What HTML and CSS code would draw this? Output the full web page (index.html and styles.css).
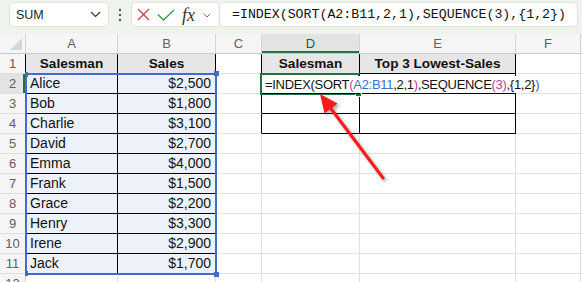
FILE: index.html
```html
<!DOCTYPE html>
<html>
<head>
<meta charset="utf-8">
<link rel="stylesheet" href="styles.css">
</head>
<body>
<div class="app">
  <div class="topbar">
    <div class="namebox">
      <span>SUM</span>
      <svg width="11" height="7" viewBox="0 0 11 7"><path d="M1 1L5.5 5.5L10 1" fill="none" stroke="#333" stroke-width="1.2"/></svg>
    </div>
    <div class="dots">
      <svg width="4" height="14" viewBox="0 0 4 14"><circle cx="2" cy="2" r="1.2" fill="#555"/><circle cx="2" cy="7" r="1.2" fill="#555"/><circle cx="2" cy="12" r="1.2" fill="#555"/></svg>
    </div>
    <div class="fxgroup">
      <svg class="ico-x" width="13" height="13" viewBox="0 0 13 13"><path d="M1 1L12 12M12 1L1 12" stroke="#e0393e" stroke-width="1.3" fill="none"/></svg>
      <svg class="ico-ok" width="18" height="12" viewBox="0 0 18 12"><path d="M1 5.5L6.5 11L17 1" stroke="#3a9a45" stroke-width="1.3" fill="none"/></svg>
      <span class="fx">fx</span>
      <svg class="ico-ch" width="8" height="5" viewBox="0 0 8 5"><path d="M0.5 0.5L4 4L7.5 0.5" fill="none" stroke="#777" stroke-width="1"/></svg>
    </div>
    <div class="formula">=INDEX(SORT(A2:B11,2,1),SEQUENCE(3),{1,2})</div>
  </div>

  <div class="sheet">
    <div class="corner"><span class="tri"></span></div>
    <div class="ch">A</div><div class="ch">B</div><div class="ch">C</div><div class="ch sel">D</div><div class="ch">E</div><div class="ch">F</div><div class="ch"></div>

    <div class="rh bl">1</div>
    <div class="c tb h">Salesman</div><div class="c tb h">Sales</div><div class="c br"></div><div class="c tb h">Salesman</div><div class="c tb h">Top 3 Lowest-Sales</div><div class="c"></div><div class="c"></div>

    <div class="rh bl rsel">2</div>
    <div class="c tb d">Alice</div><div class="c tb d n">$2,500</div><div class="c br"></div><div class="c tb edit"><span class="edtxt"><span>=INDEX(SORT</span><span class="pk">(</span><span class="bu">A2:B11</span><span>,2,1</span><span class="pk">)</span><span>,SEQUENCE</span><span class="pk">(3)</span><span>,{1,2}</span><span class="pu">)</span></span></div><div class="c tb"></div><div class="c"></div><div class="c"></div>

    <div class="rh bl">3</div>
    <div class="c tb d">Bob</div><div class="c tb d n">$1,800</div><div class="c br"></div><div class="c tb"></div><div class="c tb"></div><div class="c"></div><div class="c"></div>

    <div class="rh bl">4</div>
    <div class="c tb d">Charlie</div><div class="c tb d n">$3,100</div><div class="c br"></div><div class="c tb"></div><div class="c tb"></div><div class="c"></div><div class="c"></div>

    <div class="rh bl">5</div>
    <div class="c tb d">David</div><div class="c tb d n">$2,700</div><div class="c"></div><div class="c"></div><div class="c"></div><div class="c"></div><div class="c"></div>

    <div class="rh bl">6</div>
    <div class="c tb d">Emma</div><div class="c tb d n">$4,000</div><div class="c"></div><div class="c"></div><div class="c"></div><div class="c"></div><div class="c"></div>

    <div class="rh bl">7</div>
    <div class="c tb d">Frank</div><div class="c tb d n">$1,500</div><div class="c"></div><div class="c"></div><div class="c"></div><div class="c"></div><div class="c"></div>

    <div class="rh bl">8</div>
    <div class="c tb d">Grace</div><div class="c tb d n">$2,200</div><div class="c"></div><div class="c"></div><div class="c"></div><div class="c"></div><div class="c"></div>

    <div class="rh bl">9</div>
    <div class="c tb d">Henry</div><div class="c tb d n">$3,300</div><div class="c"></div><div class="c"></div><div class="c"></div><div class="c"></div><div class="c"></div>

    <div class="rh bl">10</div>
    <div class="c tb d">Irene</div><div class="c tb d n">$2,900</div><div class="c"></div><div class="c"></div><div class="c"></div><div class="c"></div><div class="c"></div>

    <div class="rh bl">11</div>
    <div class="c tb d">Jack</div><div class="c tb d n">$1,700</div><div class="c"></div><div class="c"></div><div class="c"></div><div class="c"></div><div class="c"></div>

    <div class="rh">12</div>
    <div class="c"></div><div class="c"></div><div class="c"></div><div class="c"></div><div class="c"></div><div class="c"></div><div class="c"></div>

    <div class="refrange">
      <span class="hd tl"></span><span class="hd tr"></span><span class="hd bl2"></span><span class="hd brr"></span>
    </div>
    <div class="active"><span class="fill"></span></div>
  </div>

  <svg class="arrow" width="582" height="282" viewBox="0 0 582 282">
    <line x1="383" y1="178" x2="329" y2="106" stroke="#ff1a1a" stroke-width="3" stroke-linecap="round"/>
    <polygon points="320,94 337.5,103.5 324.5,113.5" fill="#ff1a1a"/>
  </svg>
</div>
</body>
</html>
```

FILE: styles.css
```css
html, body {
  margin: 0;
  padding: 0;
}
body {
  width: 582px;
  height: 282px;
  overflow: hidden;
  background: #fff;
  font-family: "Liberation Sans", Arial, sans-serif;
}
.app {
  position: relative;
  width: 582px;
  height: 282px;
  overflow: hidden;
}

/* ---------- formula bar ---------- */
.topbar {
  height: 34px;
  box-sizing: border-box;
  background: #eef3eb;
  display: flex;
  align-items: flex-start;
  padding: 2px 0 0 9px;
}
.namebox {
  width: 100px;
  height: 25px;
  box-sizing: border-box;
  background: #fff;
  border: 1px solid #dfe4dc;
  border-radius: 5px;
  display: flex;
  align-items: center;
  justify-content: space-between;
  padding: 0 7px 0 6px;
  font-size: 12.5px;
  color: #222;
}
.dots {
  width: 22px;
  height: 25px;
  display: flex;
  align-items: center;
  justify-content: center;
}
.fxgroup {
  width: 87px;
  height: 25px;
  box-sizing: border-box;
  background: #fff;
  border: 1px solid #dfe4dc;
  border-right: none;
  border-radius: 5px 0 0 5px;
  display: flex;
  align-items: center;
  padding-left: 5px;
}
.ico-x { margin-right: 7px; }
.ico-ok { margin-right: 7px; }
.fx {
  font-family: "Liberation Serif", "Times New Roman", serif;
  font-style: italic;
  font-size: 18px;
  color: #333;
  margin-right: 8px;
  line-height: 1;
}
.ico-ch { margin-top: 2px; }
.formula {
  margin-left: 1px;
  width: 359px;
  height: 25px;
  box-sizing: border-box;
  background: #fff;
  border: 1px solid #dfe4dc;
  border-radius: 5px;
  padding-left: 12px;
  font-family: "Liberation Mono", "Courier New", monospace;
  font-size: 13.25px;
  line-height: 23px;
  color: #111;
  white-space: nowrap;
}

/* ---------- sheet ---------- */
.sheet {
  position: relative;
  display: grid;
  grid-template-columns: 26px 92px 98px 46px 98px 156px 65px 1fr;
  grid-auto-rows: 20px;
}
.corner, .ch, .rh, .c {
  box-sizing: border-box;
  border-right: 1px solid #e0e0e0;
  border-bottom: 1px solid #e0e0e0;
}
.corner {
  background: #f5f5f5;
  border-right-color: #d4d4d4;
  border-bottom-color: #c8c8c8;
  display: flex;
  align-items: flex-end;
  justify-content: flex-end;
  padding: 0 3px 3px 0;
}
.tri {
  width: 0;
  height: 0;
  border-left: 12px solid transparent;
  border-bottom: 12px solid #d6d6d6;
}
.ch {
  background: #f5f5f5;
  border-right-color: #d4d4d4;
  border-bottom-color: #c8c8c8;
  font-size: 13px;
  color: #616161;
  text-align: center;
  line-height: 19px;
}
.ch.sel {
  background: #e3e3e3;
  box-shadow: inset 0 -2px 0 #217346;
  color: #1e5e38;
}
.rh {
  background: #f5f5f5;
  border-right-color: #d4d4d4;
  border-bottom-color: #dedede;
  font-size: 13px;
  color: #616161;
  text-align: center;
  line-height: 19px;
}
.rh.bl { border-right-color: #000; }
.rh.rsel {
  background: #e3e3e3;
  box-shadow: inset -2px 0 0 #217346;
}
.c {
  font-size: 14px;
  line-height: 19px;
  color: #111;
  padding: 0 4px;
  white-space: nowrap;
  overflow: hidden;
}
.c.tb {
  border-right-color: #000;
  border-bottom-color: #000;
}
.c.br { border-right-color: #000; }
.c.h {
  background: #e7e6e6;
  font-weight: bold;
  font-size: 13.6px;
  text-align: center;
}
.c.d { background: #edf1f9; }
.c.n { text-align: right; }

.c.edit {
  position: relative;
  z-index: 4;
  overflow: visible;
  padding-left: 3px;
  padding-top: 1px;
  font-size: 13px;
  letter-spacing: -0.3px;
  color: #111;
}
.edtxt {
  display: inline-block;
  background: #fff;
  line-height: 17px;
  padding-right: 2px;
}
.pk { color: #c4399a; }
.bu { color: #3b6fd0; }
.pu { color: #5a4bc8; }

/* reference highlight A2:B11 */
.refrange {
  position: absolute;
  left: 25px;
  top: 39px;
  width: 192px;
  height: 202px;
  box-sizing: border-box;
  border: 2px solid #3e6ec6;
  z-index: 3;
}
.hd {
  position: absolute;
  width: 5px;
  height: 5px;
  background: #3e6ec6;
}
.hd.tl { left: -2px; top: -3px; width: 3px; }
.hd.tr { right: -4px; top: -4px; }
.hd.bl2 { left: -2px; bottom: -3px; width: 3px; }
.hd.brr { right: -4px; bottom: -4px; }

/* active cell D2 */
.active {
  position: absolute;
  left: 260px;
  top: 39px;
  width: 100px;
  height: 22px;
  box-sizing: border-box;
  border: 2px solid #217346;
  z-index: 3;
}
.fill {
  position: absolute;
  right: -4px;
  bottom: -4px;
  width: 5px;
  height: 5px;
  background: #217346;
  border: 1px solid #fff;
}

.arrow {
  position: absolute;
  left: 0;
  top: 0;
  z-index: 5;
  filter: drop-shadow(2px 2px 1.5px rgba(0,0,0,0.35));
}
```
